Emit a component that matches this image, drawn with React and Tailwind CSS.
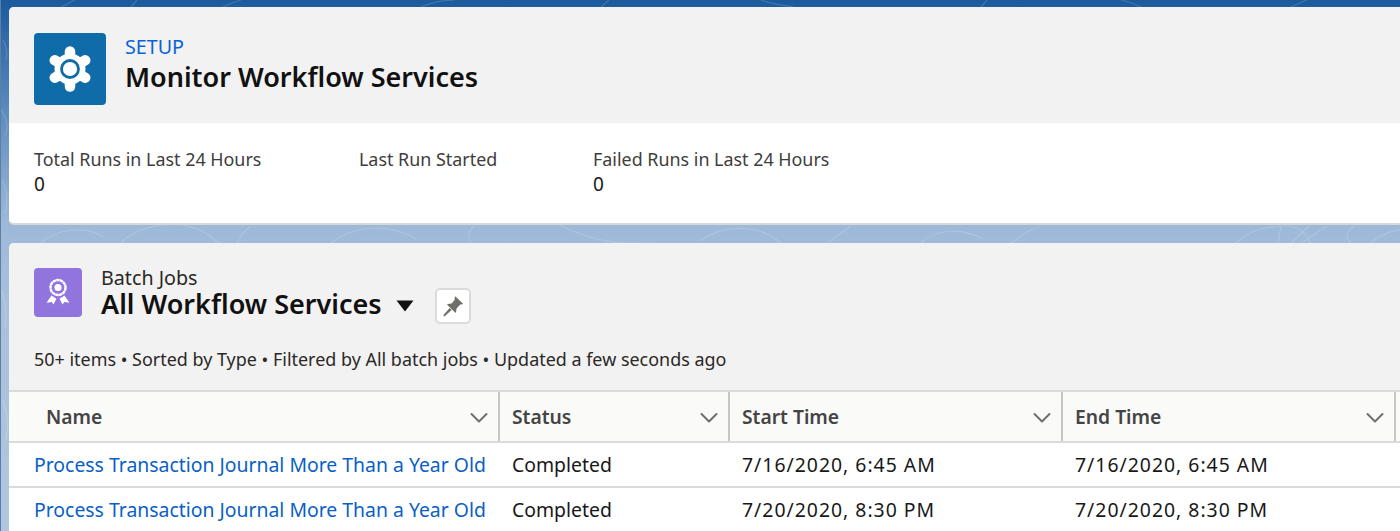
import React from "react"

const Chevron = () => (
  <svg width="20" height="12" viewBox="0 0 20 12" fill="none" stroke="#706e6b" strokeWidth="2" strokeLinecap="round" strokeLinejoin="round">
    <path d="M2.5 2 L10 9.5 L17.5 2" />
  </svg>
)

const GearIcon = () => (
  <svg width="44" height="46" viewBox="-22 -23 44 46">
    <circle r="15.5" fill="#fff" />
    <g stroke="#fff" strokeWidth="10.5" strokeLinecap="round">
      <path d="M0 -17.5V17.5" />
      <path d="M-15.2 -8.700L15.200 8.700" />
      <path d="M-15.2 8.700L15.200 -8.700" />
    </g>
    <circle r="8.500" fill="#fff" stroke="#0f6ca8" strokeWidth="2.800" />
  </svg>
)

const RibbonIcon = () => (
  <svg width="26" height="30" viewBox="0 0 26 30">
    <circle cx="13" cy="9.500" r="7.500" fill="none" stroke="#fff" strokeWidth="2.400" strokeDasharray="3.400 0.300" />
    <circle cx="13" cy="9.500" r="3.600" fill="#fff" />
    <path fill="#fff" d="M6.500 17.500l5 3.300-3 5.700-1.700-2.500-5.300.7z" />
    <path fill="#fff" d="M19.500 17.500l-5 3.300 3 5.700 1.700-2.500 5.300.7z" />
  </svg>
)

const PinIcon = () => (
  <svg width="22" height="22" viewBox="0 0 22 22" fill="#706e6b">
    <path d="M13.200 1.200l7.600 7.200c.3.300.1.800-.3.900l-2.200.3-3.800 3.800-.4 3.700c-.1.500-.6.700-1 .4L5.400 9.900c-.3-.4-.1-.9.400-1l3.800-.4 3-3.500.1-2.400c0-.5.500-.7.500-1.900z" />
    <path d="M7.600 13l2 2-6.600 6.100c-.4.300-.9.300-1.300 0-.3-.4-.3-.9 0-1.300z" />
  </svg>
)

const Swirls = () => (
  <svg className="absolute inset-0" width="1400" height="531" viewBox="0 0 1400 531" fill="none" stroke="#ffffff" strokeOpacity="0.16" strokeWidth="1.200">
    <path d="M40 243c15-14 45-18 62-6M120 243c20-22 70-25 90-6 12 11 20 8 30 6M250 226c-8 6-12 12-14 17M330 243c22-18 60-20 85-4M470 243c-4-8-2-14 4-17M560 226c40 18 60 18 92 17M700 240c24-16 58-16 80 3M850 226c-12 8-18 12-22 17M920 243c14-14 40-16 62-4M1010 243c12-8 18-14 30-17M1235 243c10-10 25-17 50-17 14 0 20 8 24 17M1277 243l3-17M1290 243l18-17M1300 243l26-17M1350 243c-8-8-2-14 4-17M1370 243c8-8 20-12 30-13" />
    <path d="M60 7c10-4 10-6 14-7M130 7l6-7M240 0c-10 3-14 5-18 7M420 7c14-6 20-6 34-7M600 7l8-7M760 0c10 4 20 5 32 7M980 7l6-7M1120 0c12 3 14 4 20 7M1290 7c6-3 10-5 16-7" />
    <path d="M2 40c4 8 5 14 3 20M0 110c6 8 8 18 4 26M1 180c6 10 6 22 3 34M0 290c5 12 6 24 4 38M2 400c4 12 6 22 3 40" />
  </svg>
)

export default function App() {
  const cols = [
    { label: "Name", cls: "w-[491px] pl-[37px] pr-[9px]" },
    { label: "Status", cls: "w-[230px] pl-[12px] pr-[9px]" },
    { label: "Start Time", cls: "w-[333px] pl-[12px] pr-[9px]" },
    { label: "End Time", cls: "w-[333px] pl-[12px] pr-[9px]" },
  ]
  const rows = [
    ["Process Transaction Journal More Than a Year Old", "Completed", "7/16/2020, 6:45 AM", "7/16/2020, 6:45 AM"],
    ["Process Transaction Journal More Than a Year Old", "Completed", "7/20/2020, 8:30 PM", "7/20/2020, 8:30 PM"],
  ]

  return (
    <div className="relative h-[531px] w-[1400px] overflow-hidden border-l border-[#5f7ea6] bg-[linear-gradient(180deg,#1b5a9c_0px,#4f82b8_90px,#9db8d8_220px,#a8c0dc_300px,#b0c6e0_531px)] pl-[8px] pt-[7px] font-['Noto_Sans','Open_Sans',sans-serif] text-[#181818]">
      <Swirls />

      <div className="relative overflow-hidden rounded-l-[5px] border-b-2 border-[#d8d8d8] bg-white">
        <div className="flex h-[116px] items-start bg-[#f2f2f2] pl-[25px] pt-[26px]">
          <div className="flex h-[72px] w-[72px] items-center justify-center rounded-[4px] bg-[#0f6ca8]">
            <GearIcon />
          </div>
          <div className="ml-[19px] mt-[3px]">
            <div className="text-[19.700px] leading-[22px] text-[#0b62d6]">SETUP</div>
            <div className="mt-[3px] text-[27px] leading-[32px] font-semibold text-[#111]">Monitor Workflow Services</div>
          </div>
        </div>
        <div className="flex h-[100px] pl-[25px] pt-[24px] text-[17.900px] leading-[25px]">
          <div className="w-[325px]">
            <div className="text-[#3e3e3c]">Total Runs in Last 24 Hours</div>
            <div className="text-[19px]">0</div>
          </div>
          <div className="w-[234px] text-[#3e3e3c]">Last Run Started</div>
          <div>
            <div className="text-[#3e3e3c]">Failed Runs in Last 24 Hours</div>
            <div className="text-[19px]">0</div>
          </div>
        </div>
      </div>

      <div className="relative mt-[18px] overflow-hidden rounded-tl-[5px] bg-white">
        <div className="h-[149px] border-b-2 border-[#dddbda] bg-[#f2f2f2] pl-[25px] pt-[25px]">
          <div className="flex">
            <div className="flex h-[49px] w-[48px] items-center justify-center rounded-[4px] bg-[#9274de]">
              <RibbonIcon />
            </div>
            <div className="ml-[19px]">
              <div className="text-[19.700px] leading-[20px] text-[#2b2826]">Batch Jobs</div>
              <div className="flex items-start">
                <span className="text-[27px] leading-[32px] font-semibold text-[#111]">All Workflow Services</span>
                <svg className="ml-[14px] mt-[12px]" width="18" height="12" viewBox="0 0 18 12" fill="#111">
                  <path d="M0.500 0.500h17L9 11.500z" />
                </svg>
                <button className="ml-[21px] flex h-[36px] w-[36px] items-center justify-center rounded-[5px] border-2 border-[#dddbda] bg-white">
                  <PinIcon />
                </button>
              </div>
            </div>
          </div>
          <div className="mt-[23px] text-[17.950px] leading-[24px] text-[#2b2826]">50+ items • Sorted by Type • Filtered by All batch jobs • Updated a few seconds ago</div>
        </div>

        <div className="flex h-[51px] border-b-2 border-[#dddbda] bg-[#fafaf9]">
          {cols.map((c) => (
            <div key={c.label} className={`flex items-center justify-between border-r-2 border-[#c9c7c5] pt-[2px] ${c.cls}`}>
              <span className="text-[19.300px] font-semibold text-[#444]">{c.label}</span>
              <Chevron />
            </div>
          ))}
        </div>

        {rows.map((r, i) => (
          <div key={i} className="flex h-[45px] border-b-2 border-[#dddbda] bg-white text-[19.400px] last:h-[44px] last:border-b-0">
            <div className="flex w-[491px] items-center pl-[25px] whitespace-nowrap text-[#0b5fc4]">{r[0]}</div>
            <div className="flex w-[230px] items-center pl-[12px]">{r[1]}</div>
            <div className="flex w-[333px] items-center pl-[12px] tracking-[1px]">{r[2]}</div>
            <div className="flex w-[333px] items-center pl-[12px] tracking-[1px]">{r[3]}</div>
          </div>
        ))}
      </div>
    </div>
  )
}
